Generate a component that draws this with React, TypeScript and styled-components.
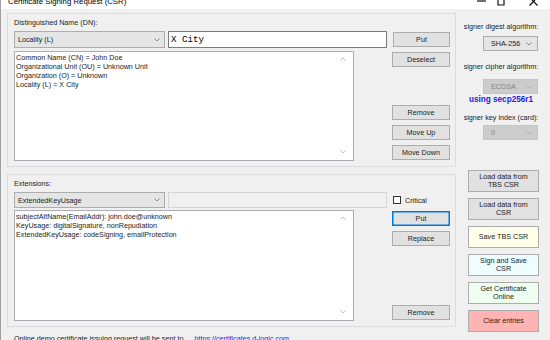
import styled, { createGlobalStyle } from "styled-components";

const GlobalStyle = createGlobalStyle`
  html, body {
    margin: 0;
    padding: 0;
    background: #f0f0f0;
  }
  body {
    font-family: "Liberation Sans", Arial, sans-serif;
  }
  * {
    box-sizing: border-box;
  }
`;

const Chevron = ({ color = "#707070" }: { color?: string }) => (
  <svg width="6" height="4" viewBox="0 0 6 4">
    <polyline points="0.5,0.5 3,3 5.5,0.5" fill="none" stroke={color} strokeWidth="0.8" />
  </svg>
);

const ChevronUp = () => (
  <svg width="6" height="4" viewBox="0 0 6 4">
    <polyline points="0.5,3.5 3,1 5.5,3.5" fill="none" stroke="#b0b0b0" strokeWidth="0.8" />
  </svg>
);

const dnLines = [
  "Common Name (CN) = John Doe",
  "Organizational Unit (OU) = Unknown Unit",
  "Organization (O) = Unknown",
  "Locality (L) = X City",
];

const extLines = [
  "subjectAltName(EmailAddr): john.doe@unknown",
  "KeyUsage: digitalSignature, nonRepudiation",
  "ExtendedKeyUsage: codeSigning, emailProtection",
];

const App = () => {
  return (
    <>
      <GlobalStyle />
      <Window>
        <TitleBar>
          <Title>Certificate Signing Request (CSR)</Title>
          <Controls>
            {/* only the lower halves of the caption glyphs are in view */}
            <svg width="9" height="6" viewBox="0 0 9 6">
              <line x1="0" y1="1" x2="9" y2="1" stroke="#111" strokeWidth="1.2" />
            </svg>
            <svg width="8" height="6" viewBox="0 0 8 6">
              <path d="M1,0 V5 H7 V0" fill="none" stroke="#111" strokeWidth="1.2" />
            </svg>
            <svg width="9" height="6" viewBox="0 0 9 6">
              <line x1="3" y1="0" x2="8.5" y2="5.5" stroke="#111" strokeWidth="1.2" />
              <line x1="6" y1="0" x2="0.5" y2="5.5" stroke="#111" strokeWidth="1.2" />
            </svg>
          </Controls>
        </TitleBar>

        <Body>
          <LeftColumn>
            <Group $height={154}>
              <GroupLabel>Distinguished Name (DN):</GroupLabel>
              <Row $height={17}>
                <Combo $width={151}>
                  <span>Locality (L)</span>
                  <Chevron />
                </Combo>
                <TextInput>X City</TextInput>
                <SideCell>
                  <Button>Put</Button>
                </SideCell>
              </Row>
              <ListRow $top={3}>
                <ListBox>
                  <ListText>
                    {dnLines.map((line) => (
                      <div key={line}>{line}</div>
                    ))}
                  </ListText>
                  <ScrollColumn>
                    <ChevronUp />
                    <Chevron color="#b0b0b0" />
                  </ScrollColumn>
                </ListBox>
                <ButtonColumn>
                  <Button>Deselect</Button>
                  <Spacer />
                  <ButtonStack>
                    <Button>Remove</Button>
                    <Button>Move Up</Button>
                    <Button>Move Down</Button>
                  </ButtonStack>
                </ButtonColumn>
              </ListRow>
            </Group>

            <Group $height={153} $top={7}>
              <GroupLabel>Extensions:</GroupLabel>
              <Row $height={16}>
                <Combo $width={151}>
                  <span>ExtendedKeyUsage</span>
                  <Chevron />
                </Combo>
                <TextInput $disabled />
                <SideCell>
                  <CheckBox />
                  <span>Critical</span>
                </SideCell>
              </Row>
              <ListRow $top={2}>
                <ListBox>
                  <ListText>
                    {extLines.map((line) => (
                      <div key={line}>{line}</div>
                    ))}
                  </ListText>
                  <ScrollColumn>
                    <ChevronUp />
                    <Chevron color="#b0b0b0" />
                  </ScrollColumn>
                </ListBox>
                <ButtonColumn>
                  <ButtonStack>
                    <Button $focused>Put</Button>
                    <Button>Replace</Button>
                  </ButtonStack>
                  <Spacer />
                  <Button>Remove</Button>
                </ButtonColumn>
              </ListRow>
            </Group>

            <Footer>
              <span>Online demo certificate issuing request will be sent to</span>
              <Link>https://certificates.d-logic.com</Link>
            </Footer>
          </LeftColumn>

          <RightColumn>
            <SideLabel $top={9}>signer digest algorithm:</SideLabel>
            <SmallCombo $top={5}>
              <span>SHA-256</span>
              <Chevron />
            </SmallCombo>
            <SideLabel $top={11}>signer cipher algorithm:</SideLabel>
            <SmallCombo $top={8} $disabled>
              <span>ECDSA</span>
              <Chevron color="#a8a8a8" />
            </SmallCombo>
            <CurveNote>using secp256r1</CurveNote>
            <SideLabel $top={8}>signer key index (card):</SideLabel>
            <SmallCombo $top={3} $disabled>
              <span>0</span>
              <Chevron color="#a8a8a8" />
            </SmallCombo>
            <ActionList>
              <ActionButton>
                Load data from
                <br />
                TBS CSR
              </ActionButton>
              <ActionButton>
                Load data from
                <br />
                CSR
              </ActionButton>
              <ActionButton $bg="#ffffea">Save TBS CSR</ActionButton>
              <ActionButton $bg="#eefdff">
                Sign and Save
                <br />
                CSR
              </ActionButton>
              <ActionButton $bg="#efffef">
                Get Certificate
                <br />
                Online
              </ActionButton>
              <ActionButton $bg="#ffb4b4">Clear entries</ActionButton>
            </ActionList>
          </RightColumn>
        </Body>
      </Window>
    </>
  );
};

const Window = styled.div`
  width: 550px;
  height: 340px;
  overflow: hidden;
  background: #f0f0f0;
  border-left: 1px solid #a0a0a0;
  display: flex;
  flex-direction: column;
  font-size: 7.2px;
  line-height: 9px;
  color: #222;
`;

const TitleBar = styled.div`
  height: 9px;
  flex-shrink: 0;
  background: #fff;
  display: flex;
  align-items: flex-start;
  padding: 0 12px 0 7px;
  overflow: hidden;
`;

const Title = styled.div`
  margin-top: -3px;
  font-size: 7.8px;
  line-height: 9px;
  color: #000;
  white-space: nowrap;
`;

const Controls = styled.div`
  margin-left: auto;
  display: flex;
  align-items: flex-start;
  gap: 11px;
  & > svg {
    display: block;
    flex-shrink: 0;
  }
  & > svg:last-child {
    margin-left: 13px;
  }
`;

const Body = styled.div`
  flex: 1;
  display: flex;
  gap: 5px;
  padding: 4px 0 0 6px;
`;

const LeftColumn = styled.div`
  width: 449px;
  display: flex;
  flex-direction: column;
`;

const Group = styled.div<{ $height: number; $top?: number }>`
  height: ${(p) => p.$height}px;
  margin-top: ${(p) => p.$top ?? 0}px;
  border: 1px solid #dcdcdc;
  padding: 4px 5px 5px 6px;
  display: flex;
  flex-direction: column;
`;

const GroupLabel = styled.div`
  height: 9px;
  margin-bottom: 4px;
  white-space: nowrap;
`;

const Row = styled.div<{ $height: number }>`
  height: ${(p) => p.$height}px;
  display: flex;
  align-items: center;
  gap: 3px;
`;

const Combo = styled.div<{ $width: number }>`
  width: ${(p) => p.$width}px;
  height: 100%;
  background: #e5e5e5;
  border: 1px solid #adadad;
  display: flex;
  align-items: center;
  justify-content: space-between;
  padding: 0 4px 0 3px;
  white-space: nowrap;
`;

const TextInput = styled.div<{ $disabled?: boolean }>`
  width: 219px;
  height: 100%;
  background: ${(p) => (p.$disabled ? "#f0f0f0" : "#fff")};
  border: 1px solid ${(p) => (p.$disabled ? "#d4d4d4" : "#7a7a7a")};
  font-family: "Liberation Mono", "Courier New", monospace;
  font-size: 9.2px;
  display: flex;
  align-items: center;
  padding-left: 2px;
  color: #000;
`;

const SideCell = styled.div`
  width: 58px;
  margin-left: 2px;
  display: flex;
  align-items: center;
  gap: 4px;
  padding-left: 1px;
`;

const CheckBox = styled.div`
  width: 8px;
  height: 8px;
  background: #fff;
  border: 1px solid #333;
`;

const Button = styled.div<{ $focused?: boolean }>`
  width: 58px;
  height: 15px;
  background: #e1e1e1;
  border: 1px solid ${(p) => (p.$focused ? "#0078d7" : "#adadad")};
  box-shadow: ${(p) => (p.$focused ? "inset 0 0 0 0.5px #0078d7" : "none")};
  display: flex;
  align-items: center;
  justify-content: center;
  white-space: nowrap;
`;

const ListRow = styled.div<{ $top: number }>`
  margin-top: ${(p) => p.$top}px;
  flex: 1;
  display: flex;
`;

const ListBox = styled.div`
  width: 340px;
  background: #fff;
  border: 1px solid #abadb3;
  display: flex;
`;

const ListText = styled.div`
  flex: 1;
  padding: 1px 1px 0;
  white-space: nowrap;
`;

const ScrollColumn = styled.div`
  width: 20px;
  display: flex;
  flex-direction: column;
  align-items: center;
  justify-content: space-between;
  padding: 5px 0 6px;
`;

const ButtonColumn = styled.div`
  width: 58px;
  margin-left: 38px;
  padding: 1px 0;
  display: flex;
  flex-direction: column;
`;

const ButtonStack = styled.div`
  display: flex;
  flex-direction: column;
  gap: 5px;
`;

const Spacer = styled.div`
  flex: 1;
`;

const Footer = styled.div`
  margin-top: 7px;
  padding-left: 7px;
  display: flex;
  gap: 11px;
  white-space: nowrap;
`;

const Link = styled.span`
  color: #1c2fd1;
`;

const RightColumn = styled.div`
  width: 80px;
  display: flex;
  flex-direction: column;
  align-items: center;
`;

const SideLabel = styled.div<{ $top: number }>`
  margin-top: ${(p) => p.$top}px;
  height: 9px;
  white-space: nowrap;
`;

const SmallCombo = styled.div<{ $top: number; $disabled?: boolean }>`
  margin-top: ${(p) => p.$top}px;
  align-self: flex-end;
  margin-right: 3px;
  width: 55px;
  height: 15px;
  background: ${(p) => (p.$disabled ? "#cccccc" : "#e5e5e5")};
  border: 1px solid ${(p) => (p.$disabled ? "#c4c4c4" : "#adadad")};
  color: ${(p) => (p.$disabled ? "#858585" : "#222")};
  display: flex;
  align-items: center;
  justify-content: space-between;
  padding: 0 5px 0 7px;
`;

const CurveNote = styled.div`
  margin-top: 1px;
  height: 10px;
  line-height: 10px;
  font-size: 8.2px;
  font-weight: 700;
  color: #2424d8;
  white-space: nowrap;
`;

const ActionList = styled.div`
  margin-top: 30px;
  align-self: flex-start;
  margin-left: 7px;
  display: flex;
  flex-direction: column;
  gap: 6px;
`;

const ActionButton = styled.div<{ $bg?: string }>`
  width: 71px;
  height: 22px;
  background: ${(p) => p.$bg ?? "#e1e1e1"};
  border: 1px solid #adadad;
  display: flex;
  align-items: center;
  justify-content: center;
  text-align: center;
  line-height: 8.5px;
`;

export default App;
